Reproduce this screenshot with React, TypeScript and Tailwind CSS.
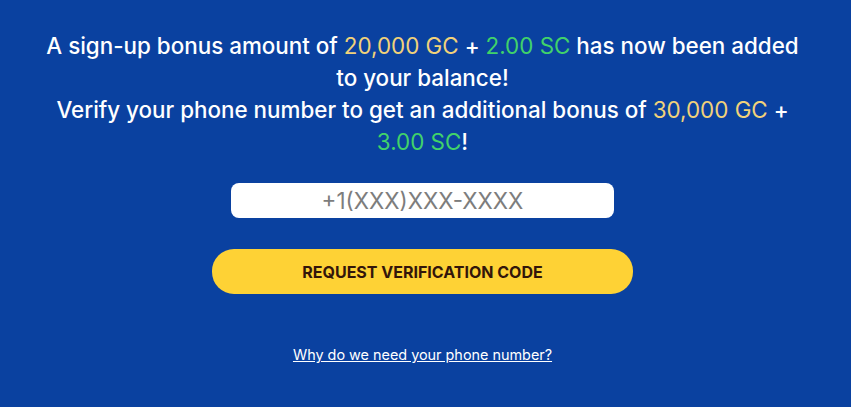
export default function App() {
  return (
    <div
      className="min-h-screen w-full bg-[#0a41a0] flex justify-center"
      style={{ fontFamily: "Inter, 'Noto Sans', sans-serif" }}
    >
      <div className="w-[845px] mr-[6px] flex flex-col items-center pt-[30px]">
        <div className="w-[768px] text-center text-white text-[22.4px] leading-8 font-medium">
          <p>
            A sign-up bonus amount of{" "}
            <span className="font-normal text-[#f1d27a]">20,000 GC</span> +{" "}
            <span className="font-normal text-[#41d26a]">2.00 SC</span> has now been added to your
            balance!
          </p>
          <p>
            Verify your phone number to get an additional bonus of{" "}
            <span className="font-normal text-[#f1d27a]">30,000 GC</span> +{" "}
            <span className="font-normal text-[#41d26a]">3.00 SC</span>!
          </p>
        </div>

        <input
          type="tel"
          placeholder="+1(XXX)XXX-XXXX"
          className="mt-[25px] w-[383px] h-[35px] rounded-lg bg-white text-center text-[22.4px] text-gray-700 placeholder:text-[#7d7d7d] outline-none"
        />

        <button className="mt-[31px] w-[421px] h-[45px] rounded-[22px] bg-[#fed235] text-[16px] font-bold text-[#33160a]">
          REQUEST VERIFICATION CODE
        </button>

        <a href="#" className="mt-[50px] text-[14.4px] text-white underline">
          Why do we need your phone number?
        </a>
      </div>
    </div>
  );
}
